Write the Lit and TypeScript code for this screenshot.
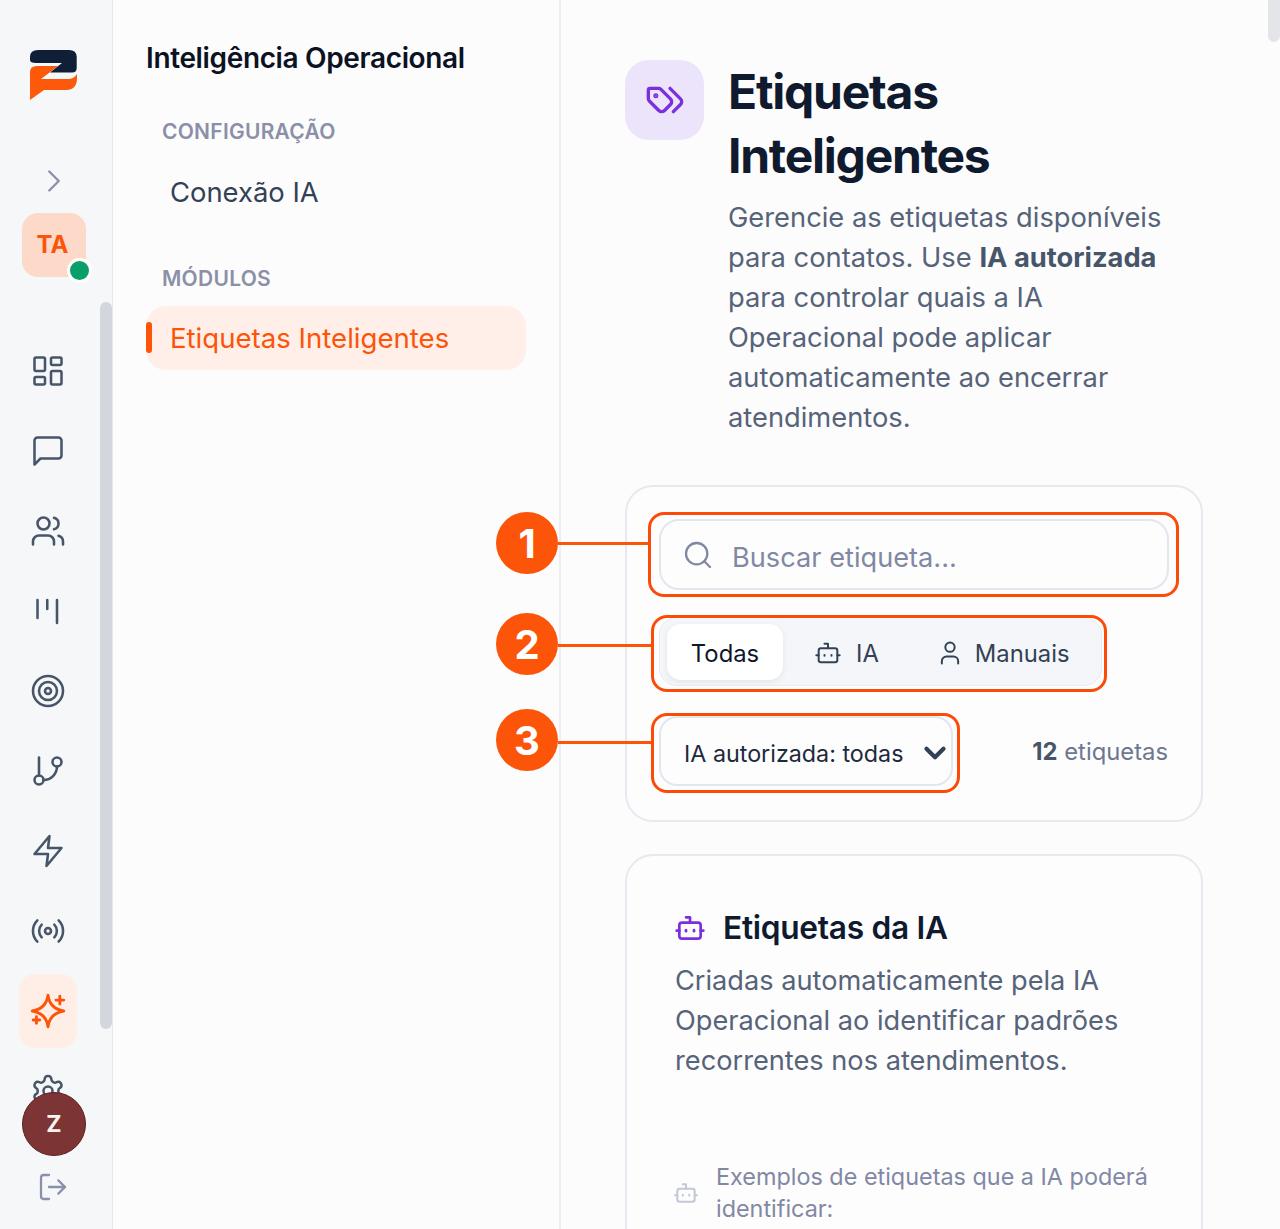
import { LitElement, html, css, svg } from "lit";
import { customElement } from "lit/decorators.js";

const ic = (body: unknown, cls = "") =>
  html`<svg class="ic ${cls}" viewBox="0 0 24 24" fill="none" stroke="currentColor" stroke-linecap="round" stroke-linejoin="round">${body}</svg>`;

const P = {
  dash: svg`<rect x="3" y="3" width="7" height="9" rx="1"/><rect x="14" y="3" width="7" height="5" rx="1"/><rect x="14" y="12" width="7" height="9" rx="1"/><rect x="3" y="16" width="7" height="5" rx="1"/>`,
  msg: svg`<path d="M21 15a2 2 0 0 1-2 2H7l-4 4V5a2 2 0 0 1 2-2h14a2 2 0 0 1 2 2z"/>`,
  users: svg`<path d="M16 21v-2a4 4 0 0 0-4-4H6a4 4 0 0 0-4 4v2"/><circle cx="9" cy="7" r="4"/><path d="M22 21v-2a4 4 0 0 0-3-3.87"/><path d="M16 3.13a4 4 0 0 1 0 7.75"/>`,
  kanban: svg`<path d="M5 4.7v12"/><path d="M11.5 4.7v6"/><path d="M18 4.7v15.3"/>`,
  target: svg`<circle cx="12" cy="12" r="10"/><circle cx="12" cy="12" r="6"/><circle cx="12" cy="12" r="2"/>`,
  branch: svg`<line x1="6" y1="3" x2="6" y2="15"/><circle cx="18" cy="6" r="3"/><circle cx="6" cy="18" r="3"/><path d="M18 9a9 9 0 0 1-9 9"/>`,
  zap: svg`<path d="M13 2 3 14h9l-1 8 10-12h-9l1-8z"/>`,
  radio: svg`<path d="M4.9 19.1C1 15.2 1 8.8 4.9 4.9"/><path d="M7.8 16.2c-2.3-2.3-2.3-6.1 0-8.5"/><circle cx="12" cy="12" r="2"/><path d="M16.2 7.8c2.3 2.3 2.3 6.1 0 8.5"/><path d="M19.1 4.9C23 8.8 23 15.1 19.1 19"/>`,
  sparkles: svg`<path d="M12 1.5C12.8 7.5 16.5 11 22.5 12C16.5 13 12.8 16.5 12 22.5C11.2 16.5 7.5 13 1.5 12C7.5 11 11.2 7.5 12 1.5Z"/><path d="M19.9 2.1v5.2"/><path d="M17.3 4.7h5.2"/><path d="M4.3 15.8v4.4"/><path d="M2.1 18h4.4"/>`,
  gear: svg`<path d="M12.22 2h-.44a2 2 0 0 0-2 2v.18a2 2 0 0 1-1 1.73l-.43.25a2 2 0 0 1-2 0l-.15-.08a2 2 0 0 0-2.73.73l-.22.38a2 2 0 0 0 .73 2.73l.15.1a2 2 0 0 1 1 1.72v.51a2 2 0 0 1-1 1.74l-.15.09a2 2 0 0 0-.73 2.73l.22.38a2 2 0 0 0 2.73.73l.15-.08a2 2 0 0 1 2 0l.43.25a2 2 0 0 1 1 1.73V20a2 2 0 0 0 2 2h.44a2 2 0 0 0 2-2v-.18a2 2 0 0 1 1-1.73l.43-.25a2 2 0 0 1 2 0l.15.08a2 2 0 0 0 2.73-.73l.22-.39a2 2 0 0 0-.73-2.73l-.15-.08a2 2 0 0 1-1-1.74v-.5a2 2 0 0 1 1-1.74l.15-.09a2 2 0 0 0 .73-2.73l-.22-.38a2 2 0 0 0-2.73-.73l-.15.08a2 2 0 0 1-2 0l-.43-.25a2 2 0 0 1-1-1.73V4a2 2 0 0 0-2-2z"/><circle cx="12" cy="12" r="3"/>`,
  logout: svg`<path d="M9 21H5a2 2 0 0 1-2-2V5a2 2 0 0 1 2-2h4"/><polyline points="16 17 21 12 16 7"/><line x1="21" y1="12" x2="9" y2="12"/>`,
  tags: svg`<path d="m15 5 6.3 6.3a2.4 2.4 0 0 1 0 3.4L17 19"/><path d="M9.586 5.586A2 2 0 0 0 8.172 5H3a1 1 0 0 0-1 1v5.172a2 2 0 0 0 .586 1.414L8.29 18.29a2.426 2.426 0 0 0 3.42 0l3.58-3.58a2.426 2.426 0 0 0 0-3.42z"/><circle cx="6.5" cy="9.5" r=".5" fill="currentColor"/>`,
  bot: svg`<path d="M12 8V4H9"/><rect width="16" height="12" x="4" y="8" rx="2"/><path d="M2 14h2"/><path d="M20 14h2"/><path d="M15 13.6v.8"/><path d="M9 13.6v.8"/>`,
  search: svg`<circle cx="11" cy="11" r="8"/><path d="m21 21-4.3-4.3"/>`,
  user: svg`<path d="M19 21v-2a4 4 0 0 0-4-4H9a4 4 0 0 0-4 4v2"/><circle cx="12" cy="7" r="4"/>`,
  chevD: svg`<path d="m6 9 6 6 6-6"/>`,
  chevR: svg`<path d="m9 18 6-6-6-6"/>`,
};

@customElement("app-root")
export class AppRoot extends LitElement {
  static styles = css`
    :host {
      display: block;
      position: relative;
      height: 1229px;
      overflow: hidden;
      background: #fcfcfd;
      font-family: Inter, "Liberation Sans", sans-serif;
      color: #0f172a;
    }
    * { box-sizing: border-box; }
    .shell { display: flex; height: 1229px; }
    .ic { display: block; flex: none; stroke-width: 1.7; }

    /* rail */
    .rail {
      position: relative;
      width: 113px;
      flex: none;
      background: #f6f7f9;
      border-right: 1px solid #e6e8ee;
      display: flex;
      flex-direction: column;
      height: 1229px;
      overflow: hidden;
    }
    .logo { display: block; margin: 48px 0 0 29px; width: 50px; height: 53px; flex: none; }
    .ic.expand { margin: 61px 0 0 35px; width: 38px; height: 38px; color: #8b90a8; stroke-width: 1.5; }
    .org {
      position: relative;
      flex: none;
      margin: 13px 0 0 22px;
      width: 64px;
      height: 64px;
      border-radius: 16px;
      background: #fcd9c8;
      color: #fc5408;
      font-size: 24px;
      font-weight: 700;
      display: flex;
      align-items: center;
      justify-content: center;
      padding: 0 3px 1px 0;
    }
    .org i {
      position: absolute;
      right: -6px;
      bottom: -6px;
      width: 25px;
      height: 25px;
      border-radius: 50%;
      background: #0a9e68;
      border: 3px solid #fff;
    }
    .nav { margin-top: 54px; width: 96px; display: flex; flex-direction: column; color: #475569; }
    .nav > div { height: 80px; flex: none; display: flex; align-items: center; justify-content: center; }
    .nav .ic { width: 36px; height: 36px; }
    .nav .on { height: 74px; width: 58px; margin: 3px 0 3px 19px; border-radius: 16px; background: #ffeee6; color: #fc5408; }
    .nav .on .ic { stroke-width: 1.9; }
    .ic.logout { position: absolute; left: 37px; top: 1171px; width: 32px; height: 32px; color: #8a90aa; }
    .avatar {
      position: absolute;
      left: 22px;
      top: 1092px;
      width: 64px;
      height: 64px;
      border-radius: 50%;
      background: #7c3434;
      border: 1px solid #5e1f1f;
      color: #fbf3f1;
      font-size: 23px;
      font-weight: 700;
      display: flex;
      align-items: center;
      justify-content: center;
    }
    .thumb { position: absolute; left: 100px; top: 302px; width: 12px; height: 727px; border-radius: 6px; background: #d3d6dc; }

    /* side panel */
    .side { width: 448px; flex: none; border-right: 2px solid #eceef3; padding: 41px 33px 0 33px; }
    .side h2 { margin: 0; font-size: 28px; line-height: 34px; font-weight: 600; letter-spacing: -0.36px; color: #0b1222; }
    .group { margin: 44px 0 0 16px; font-size: 21px; line-height: 26px; font-weight: 600; letter-spacing: 0.25px; color: #8b90a8; }
    .link { margin: 25px 0 0 24px; font-size: 27.4px; line-height: 44px; color: #334155; }
    .group.two { margin-top: 52px; }
    .active {
      position: relative;
      margin-top: 14px;
      width: 380px;
      height: 64px;
      border-radius: 20px;
      background: #ffefe8;
      color: #fc5408;
      font-size: 27.6px;
      display: flex;
      align-items: center;
      padding-left: 24px;
    }
    .active::before { content: ""; position: absolute; left: 0; top: 16px; width: 6px; height: 31px; border-radius: 3px; background: #fc5408; }

    /* main */
    .main { flex: 1; padding: 60px 78px 0 64px; min-width: 0; }
    .head { display: flex; gap: 24px; align-items: flex-start; }
    .tile { width: 79px; height: 80px; flex: none; border-radius: 24px; background: #ebe4fa; color: #7c2fdc; display: flex; align-items: center; justify-content: center; }
    .tile .ic { width: 40px; height: 40px; stroke-width: 2; }
    .head h1 { margin: 0; font-size: 48px; line-height: 64px; font-weight: 700; letter-spacing: -1.25px; color: #0f1a2e; }
    .head p { margin: 10px 0 0; font-size: 27.3px; line-height: 40px; color: #566379; }
    .head p b { font-weight: 700; color: #475569; }

    .card { border: 2px solid #e6e9ef; border-radius: 28px; background: #fdfdfe; width: 578px; }
    .filters { margin-top: 47px; height: 337px; padding: 32px 32px 0; }
    .search { height: 71px; border: 2px solid #e2e6ed; border-radius: 20px; display: flex; align-items: center; padding-left: 21px; gap: 18px; color: #8288a3; font-size: 27.2px; background: #fdfdfe; }
    .search .ic { width: 32px; height: 32px; }
    .search span { margin-top: 6px; }
    .seg { margin-top: 27px; width: 443px; height: 69px; background: #f4f6f9; border: 1px solid #e8ebf0; border-radius: 18px; display: flex; align-items: center; padding: 1px 0 0 7px; font-size: 23.8px; color: #334155; }
    .seg > div { display: flex; align-items: center; height: 56px; padding-top: 2px; }
    .seg .sel { width: 116px; justify-content: center; background: #fff; border-radius: 14px; color: #0f172a; box-shadow: 0 2px 6px rgba(15, 23, 42, 0.08); }
    .seg .ic { width: 28px; height: 28px; }
    .seg .ia { margin-left: 31px; gap: 14px; }
    .seg .man { margin-left: 57px; gap: 11px; }
    .row { margin-top: 30px; display: flex; align-items: center; justify-content: space-between; padding-right: 1px; }
    .select { width: 294px; height: 70px; border: 2px solid #e2e6ed; border-radius: 18px; display: flex; align-items: center; justify-content: space-between; padding: 0 0 0 23px; font-size: 23.3px; color: #1e293b; white-space: nowrap; }
    .select span { margin-top: 4px; }
    .select .ic { width: 34px; height: 34px; stroke-width: 3; color: #334155; margin: 4px -1px 0 0; }
    .count { font-size: 23.8px; color: #6e7791; }
    .count b { color: #475569; font-weight: 700; }

    .ai { margin-top: 32px; height: 460px; padding: 49px 48px 0; }
    .ai-h { display: flex; align-items: center; gap: 17px; }
    .ai-h .ic { width: 32px; height: 32px; color: #7c2fdc; margin-left: -1px; stroke-width: 2; }
    .ai-h h3 { margin: 0; font-size: 31.7px; line-height: 46px; font-weight: 600; letter-spacing: -0.3px; color: #0f1a2e; }
    .ai p { margin: 10px 0 0; font-size: 27.2px; line-height: 40px; color: #566379; }
    .ex { margin-top: 80px; display: flex; align-items: center; gap: 17px; font-size: 23.4px; line-height: 32px; color: #8288a3; }
    .ex .ic { width: 26px; height: 26px; color: #c2c8d6; margin-left: -2px; stroke-width: 1.9; }

    /* annotations */
    .dot {
      position: absolute;
      left: 496px;
      width: 62px;
      height: 62px;
      border-radius: 50%;
      background: #fc5408;
      color: #fff;
      font-size: 40px;
      font-weight: 700;
      display: flex;
      align-items: center;
      justify-content: center;
    }
    .wire { position: absolute; left: 558px; height: 3px; background: #fc5408; }
    .box { position: absolute; border: 3px solid #fc4a08; border-radius: 16px; }
    .d1 { top: 512px; } .d2 { top: 613px; } .d3 { top: 709px; }
    .w1 { top: 542px; width: 92px; } .w2 { top: 644px; width: 94px; } .w3 { top: 741px; width: 94px; }
    .b1 { left: 648px; top: 512px; width: 531px; height: 85px; }
    .b2 { left: 651px; top: 615px; width: 456px; height: 77px; }
    .b3 { left: 651px; top: 713px; width: 309px; height: 80px; }
    .pagebar { position: absolute; right: 0; top: 0; width: 12px; height: 42px; border-radius: 0 0 6px 6px; background: #e3e5e9; }
  `;

  render() {
    return html`
      <div class="shell">
        <aside class="rail">
          <svg class="logo" viewBox="29 48 50 53">
            <path fill="#0f1f38" d="M30 60V57Q30 50 38 50H69Q76.7 50 76.7 57V68Q76.7 72.5 72 72.5H50L62 63H36Q30 63 30 60Z" />
            <path fill="#fc5a0a" d="M30 72Q30 66 37 66H58L41 79H68Q74 79 77 74V78Q77 90 66 90H44L30 100Z" />
          </svg>
          ${ic(P.chevR, "expand")}
          <div class="org">TA<i></i></div>
          <div class="nav">
            <div>${ic(P.dash)}</div>
            <div>${ic(P.msg)}</div>
            <div>${ic(P.users)}</div>
            <div>${ic(P.kanban)}</div>
            <div>${ic(P.target)}</div>
            <div>${ic(P.branch)}</div>
            <div>${ic(P.zap)}</div>
            <div>${ic(P.radio)}</div>
            <div class="on">${ic(P.sparkles)}</div>
            <div>${ic(P.gear)}</div>
          </div>
          <div class="thumb"></div>
          <div class="avatar">Z</div>
          ${ic(P.logout, "logout")}
        </aside>

        <nav class="side">
          <h2>Inteligência Operacional</h2>
          <div class="group">CONFIGURAÇÃO</div>
          <div class="link">Conexão IA</div>
          <div class="group two">MÓDULOS</div>
          <div class="active">Etiquetas Inteligentes</div>
        </nav>

        <main class="main">
          <header class="head">
            <div class="tile">${ic(P.tags)}</div>
            <div>
              <h1>Etiquetas Inteligentes</h1>
              <p>Gerencie as etiquetas disponíveis para contatos. Use <b>IA autorizada</b> para controlar quais a IA Operacional pode aplicar automaticamente ao encerrar atendimentos.</p>
            </div>
          </header>

          <section class="card filters">
            <div class="search">${ic(P.search)}<span>Buscar etiqueta...</span></div>
            <div class="seg">
              <div class="sel">Todas</div>
              <div class="ia">${ic(P.bot)}IA</div>
              <div class="man">${ic(P.user)}Manuais</div>
            </div>
            <div class="row">
              <div class="select"><span>IA autorizada: todas</span>${ic(P.chevD)}</div>
              <div class="count"><b>12</b> etiquetas</div>
            </div>
          </section>

          <section class="card ai">
            <div class="ai-h">${ic(P.bot)}<h3>Etiquetas da IA</h3></div>
            <p>Criadas automaticamente pela IA Operacional ao identificar padrões recorrentes nos atendimentos.</p>
            <div class="ex">${ic(P.bot)}<span>Exemplos de etiquetas que a IA poderá identificar:</span></div>
          </section>
        </main>
      </div>

      <div class="wire w1"></div><div class="wire w2"></div><div class="wire w3"></div>
      <div class="dot d1">1</div><div class="dot d2">2</div><div class="dot d3">3</div>
      <div class="box b1"></div><div class="box b2"></div><div class="box b3"></div>
      <div class="pagebar"></div>
    `;
  }
}
